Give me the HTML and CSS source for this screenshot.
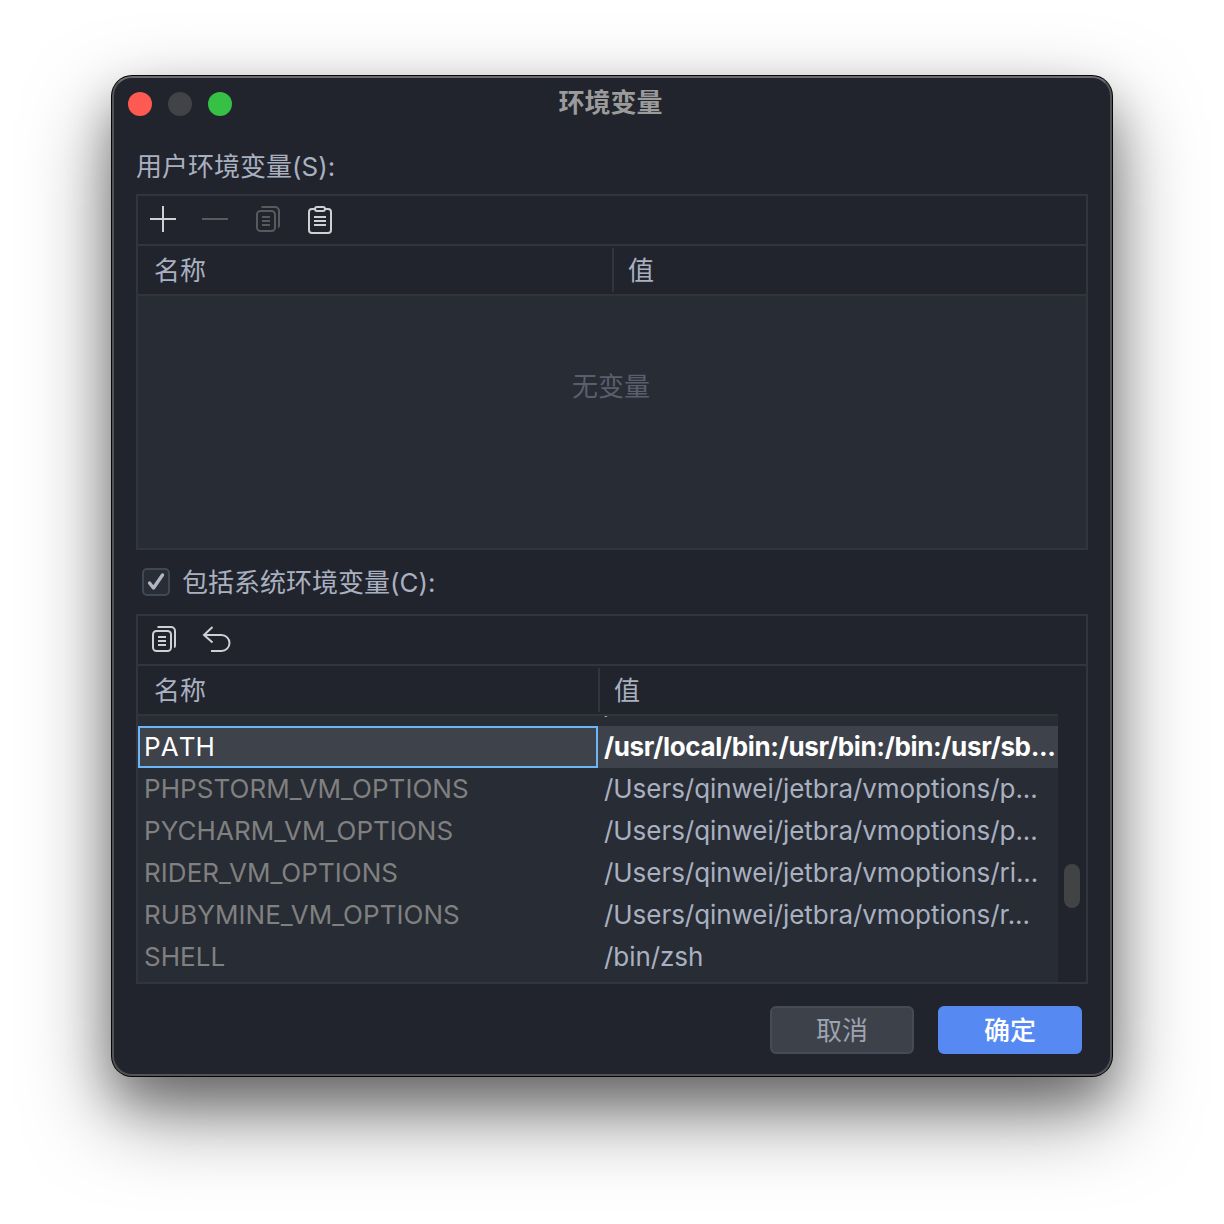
FILE: index.html
```html
<!DOCTYPE html>
<html lang="zh-CN">
<head>
<meta charset="utf-8">
<title>环境变量</title>
<link rel="stylesheet" href="styles.css">
</head>
<body>
<svg class="sprite" width="0" height="0" aria-hidden="true">
  <symbol id="copy" viewBox="0 0 32 32">
    <rect x="6" y="8" width="18" height="20" rx="3.5"/>
    <path d="M10.500 4H24a4 4 0 0 1 4 4v14.500q0 1.500-1 1.500M11 14h8M11 18h8M11 22h8"/>
  </symbol>
</svg>
<main class="window">
  <header class="titlebar">
    <div class="lights"><i class="light close"></i><i class="light"></i><i class="light expand"></i></div>
    <h1 class="title">环境变量</h1>
  </header>
  <div class="content">
    <div class="label">用户环境变量(S):</div>
    <section class="panel user">
      <div class="toolbar">
        <svg class="icon" viewBox="0 0 32 32"><path d="M3 16h26M16 3v26"/></svg>
        <svg class="icon off" viewBox="0 0 32 32"><path d="M3 16h26"/></svg>
        <svg class="icon off"><use href="#copy"/></svg>
        <svg class="icon" viewBox="0 0 32 32"><path d="M12 6H9a3 3 0 0 0-3 3v18a3 3 0 0 0 3 3h16a3 3 0 0 0 3-3V9a3 3 0 0 0-3-3h-3M11 14h12M11 18h12M11 22h12"/><rect x="12" y="4" width="10" height="4" rx="2"/></svg>
      </div>
      <div class="head"><span class="th">名称</span><span class="th">值</span></div>
      <div class="empty">无变量</div>
    </section>
    <label class="check">
      <svg class="box" viewBox="0 0 28 28"><rect x="1" y="1" width="26" height="26" rx="4"/><path d="M7.500 15l4 5L20.500 7"/></svg>
      <span class="check-text">包括系统环境变量(C):</span>
    </label>
    <section class="panel system">
      <div class="toolbar">
        <svg class="icon"><use href="#copy"/></svg>
        <svg class="icon" viewBox="0 0 32 32"><path d="M13.500 4L5 12l8.500 7.500M5 12h17.500a8 8 0 0 1 0 16H12"/></svg>
      </div>
      <div class="head"><span class="th">名称</span><span class="th">值</span></div>
      <div class="scroller">
        <div class="rows">
          <div class="row"><span class="name"></span><span class="value">/</span></div>
          <div class="row selected"><span class="name">PATH</span><span class="value">/usr/local/bin:/usr/bin:/bin:/usr/sb...</span></div>
          <div class="row"><span class="name">PHPSTORM_VM_OPTIONS</span><span class="value">/Users/qinwei/jetbra/vmoptions/p...</span></div>
          <div class="row"><span class="name">PYCHARM_VM_OPTIONS</span><span class="value">/Users/qinwei/jetbra/vmoptions/p...</span></div>
          <div class="row"><span class="name">RIDER_VM_OPTIONS</span><span class="value">/Users/qinwei/jetbra/vmoptions/ri...</span></div>
          <div class="row"><span class="name">RUBYMINE_VM_OPTIONS</span><span class="value">/Users/qinwei/jetbra/vmoptions/r...</span></div>
          <div class="row"><span class="name">SHELL</span><span class="value">/bin/zsh</span></div>
        </div>
        <div class="track"><div class="thumb"></div></div>
      </div>
    </section>
    <footer class="actions">
      <button class="btn">取消</button>
      <button class="btn primary">确定</button>
    </footer>
  </div>
</main>
</body>
</html>
```
FILE: styles.css
```css
* { box-sizing: border-box; }
body {
  margin: 0;
  height: 1224px;
  padding: 76px 112px;
  overflow: hidden;
  background: #fff;
  color: #a9b0c0;
  font: 26px/40px Inter, "Noto Sans CJK SC", sans-serif;
}
.sprite { display: block; }
.window {
  width: 1000px;
  height: 1000px;
  border: 2px solid #515356;
  border-top-color: #6a6c6f;
  border-radius: 20px;
  background: #21242c;
  box-shadow: 0 0 0 1px #060606, 0 24px 44px rgba(0, 0, 0, .25), 0 36px 84px rgba(0, 0, 0, .5);
}
.titlebar {
  display: grid;
  grid-template-columns: 1fr auto 1fr;
  align-items: center;
  height: 52px;
  padding: 0 14px;
}
.lights { display: flex; gap: 16px; }
.light { width: 24px; height: 24px; border-radius: 50%; background: #414347; }
.close { background: #ff5a52; }
.expand { background: #36c146; }
.title { margin: 0; padding: 0 3px 2px 0; font-size: 26px; font-weight: 700; color: #9b9b9b; }
.content { padding: 0 22px; }
.label { height: 64px; padding-top: 17px; }
.panel { border: 2px solid #32353d; }
.user { height: 356px; background: #282c34; }
.toolbar {
  display: flex;
  align-items: center;
  gap: 20px;
  height: 50px;
  padding: 0 9px 2px;
  border-bottom: 2px solid #32353d;
  background: #21242c;
}
.icon { width: 32px; height: 32px; fill: none; stroke: #ced0d6; stroke-width: 2; }
.off { stroke: #5a5a5c; }
.head {
  display: grid;
  grid-template-columns: 474px 1fr;
  height: 50px;
  padding: 2px 0;
  border-bottom: 2px solid #323538;
  background: #21242c;
}
.th { padding: 4px 16px 0; line-height: 38px; }
.th + .th { border-left: 2px solid #32353b; padding-left: 14px; }
.empty { padding-top: 71px; padding-right: 2px; text-align: center; color: #5a5f6d; }
.check { display: flex; align-items: center; gap: 12px; height: 64px; padding-left: 6px; }
.check-text { padding-top: 2px; }
.box { width: 28px; height: 28px; fill: #292d36; stroke: #414855; stroke-width: 2; }
.box path { fill: none; stroke: #b1b6c5; stroke-width: 3.4; stroke-linecap: round; stroke-linejoin: round; }
.system { height: 370px; }
.system .head { width: 920px; grid-template-columns: 460px 1fr; }
.scroller { display: flex; height: 266px; overflow: hidden; }
.rows { width: 920px; background: #282c34; }
.row { display: grid; grid-template-columns: 460px 1fr; height: 42px; line-height: 42px; white-space: nowrap; }
.row:first-child { margin-top: -32px; }
.name { padding-left: 6px; color: #808080; letter-spacing: .05px; }
.value { padding-left: 6px; letter-spacing: -.05px; }
.selected { background: #3e424a; }
.selected .name {
  padding-left: 4px;
  border: 2px solid #6cb6f8;
  line-height: 38px;
  color: #fff;
  font-kerning: none;
}
.selected .value { color: #fff; font-weight: 700; letter-spacing: -.34px; }
.track { flex: 1; padding: 148px 6px 0; }
.thumb { width: 16px; height: 44px; border-radius: 8px; background: #414345; }
.actions { display: flex; justify-content: flex-end; gap: 24px; padding: 22px 6px 0; }
.btn {
  width: 144px;
  height: 48px;
  padding: 2px 0 0;
  border: 2px solid #464c57;
  border-radius: 6px;
  background: #3d4149;
  color: #9da3b0;
  font: inherit;
}
.primary { border-color: #568af2; background: #568af2; color: #fff; font-weight: 500; }
```
